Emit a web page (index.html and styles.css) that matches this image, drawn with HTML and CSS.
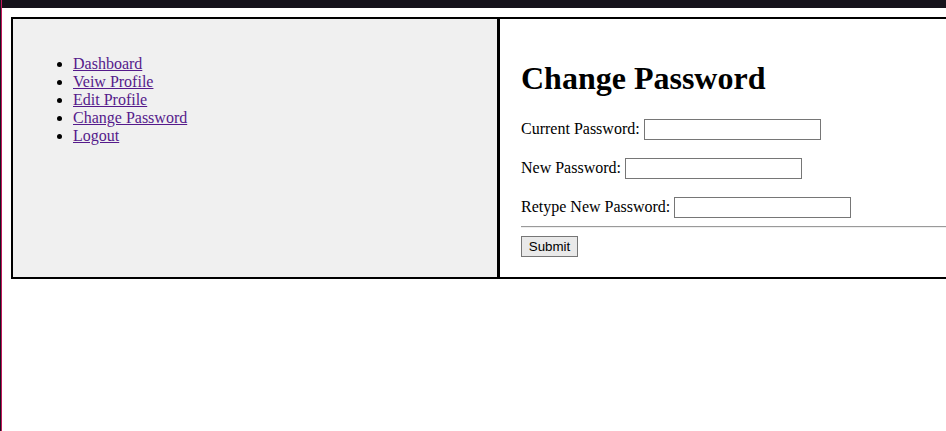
FILE: index.html
```html
<!DOCTYPE html>
<html>
<head>
<meta charset="utf-8">
<link rel="stylesheet" href="styles.css">
</head>
<body>
<div class="edge"></div>
<div class="topbar"></div>
<div class="main">
  <div class="sidebar">
    <ul class="nav">
      <li><a href="#">Dashboard</a></li>
      <li><a href="#">Veiw Profile</a></li>
      <li><a href="#">Edit Profile</a></li>
      <li><a href="#">Change Password</a></li>
      <li><a href="#">Logout</a></li>
    </ul>
  </div>
  <div class="content">
    <h1 class="title">Change Password</h1>
    <form class="form">
      <div class="row"><label>Current Password:</label><input type="password" class="field"></div>
      <div class="row"><label>New Password:</label><input type="password" class="field"></div>
      <div class="row"><label>Retype New Password:</label><input type="password" class="field"></div>
      <hr class="rule">
      <button type="button" class="submit">Submit</button>
    </form>
  </div>
</div>
</body>
</html>
```
FILE: styles.css
```css
html {
  overflow: hidden;
  background: #fff;
}
body {
  margin: 0;
  font-family: "Liberation Serif", "Times New Roman", serif;
  font-size: 16px;
  color: #000;
}
.edge {
  position: fixed;
  left: 0;
  top: 0;
  bottom: 0;
  width: 1px;
  border-right: 1px solid #c2185b;
  background: #1a1420;
  z-index: 5;
}
.topbar {
  height: 8px;
  background: #15121b;
}
.main {
  display: flex;
  margin: 9px 0 0 11px;
  width: 1100px;
}
.sidebar {
  width: 444px;
  border: 2px solid #000;
  background: #f0f0f0;
  padding: 20px;
}
.nav {
  margin: 16px 0;
  padding-left: 40px;
  line-height: 18px;
}
.nav a {
  color: #551a8b;
  text-decoration: underline;
}
.content {
  flex: 1;
  border: 2px solid #000;
  border-left-width: 1px;
  padding: 20px 20px 20px 21px;
  background: #fff;
}
.title {
  font-size: 32px;
  font-weight: bold;
  margin: 21.44px 0;
  line-height: 37px;
}
.form {
  margin: 0;
}
.row {
  display: flex;
  align-items: center;
  gap: 4px;
  height: 21px;
  margin-bottom: 18px;
}
.row:nth-child(3) {
  margin-bottom: 0;
}
.field {
  box-sizing: border-box;
  width: 177px;
  height: 21px;
  border: 1px solid #767676;
  padding: 1px 2px;
  margin: 0;
  background: #fff;
}
.rule {
  margin: 8px 0;
  border: 0;
  border-top: 1px solid #9a9a9a;
  border-bottom: 1px solid #eeeeee;
  height: 0;
}
.submit {
  box-sizing: border-box;
  width: 57px;
  height: 21px;
  margin: 0;
  padding: 1px 6px;
  font-family: "Liberation Sans", Arial, sans-serif;
  font-size: 13.33px;
  color: #000;
  background: #e9e9e9;
  border: 1px solid #767676;
  border-radius: 0;
  display: block;
}
```
